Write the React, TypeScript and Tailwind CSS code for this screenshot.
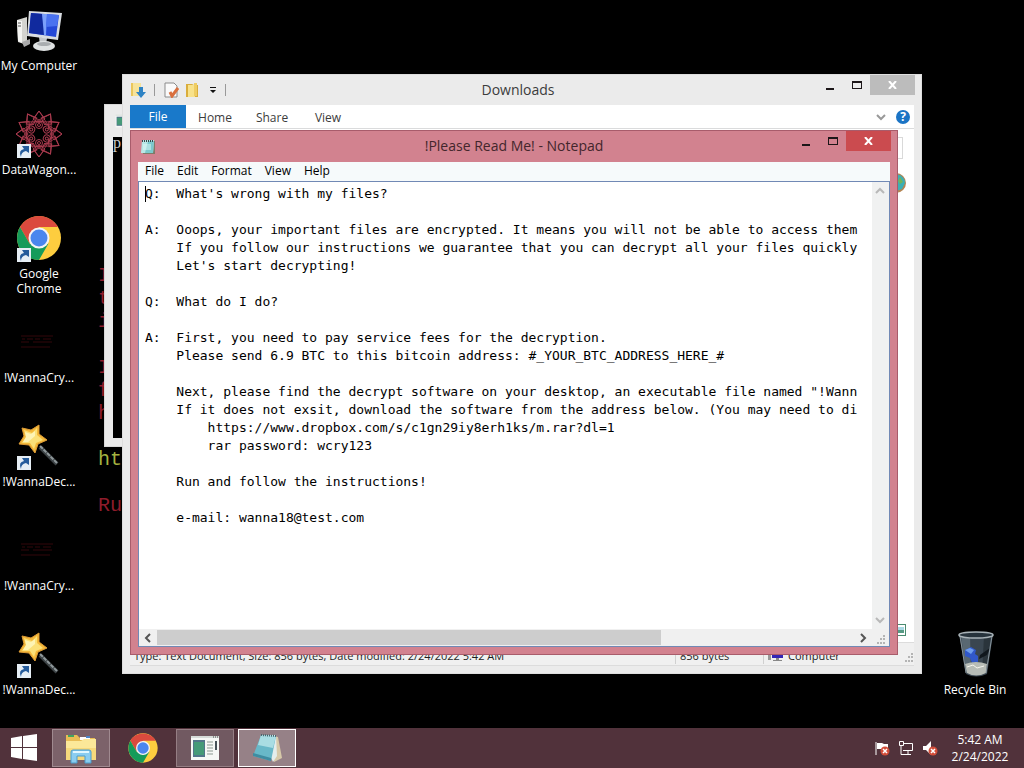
import { ReactNode } from "react";

const note = `Q:  What's wrong with my files?

A:  Ooops, your important files are encrypted. It means you will not be able to access them
    If you follow our instructions we guarantee that you can decrypt all your files quickly
    Let's start decrypting!

Q:  What do I do?

A:  First, you need to pay service fees for the decryption.
    Please send 6.9 BTC to this bitcoin address: #_YOUR_BTC_ADDRESS_HERE_#

    Next, please find the decrypt software on your desktop, an executable file named "!Wann
    If it does not exsit, download the software from the address below. (You may need to di
        https://www.dropbox.com/s/c1gn29iy8erh1ks/m.rar?dl=1
        rar password: wcry123

    Run and follow the instructions!

    e-mail: wanna18@test.com`;

function ComputerIcon() {
  return (
    <svg viewBox="0 0 48 48" className="size-12">
      <path d="M2 14 12 11v28L3 36z" fill="#d4d4d0" />
      <path d="M2 14 7 15v22l-4-2z" fill="#f4f4f2" />
      <path d="M3 17h3M3 20h3" stroke="#555" />
      <path d="M7 36 15 33v5l-6 3z" fill="#aaa" />
      <path d="m24 31 8 1-1 7h-6z" fill="#c4c7ca" />
      <ellipse cx="29" cy="40" rx="11" ry="5" fill="#dfe2e3" />
      <ellipse cx="29" cy="38" rx="7" ry="2" fill="#a9adb0" />
      <path d="m14 5 33 2-4 27-31-4z" fill="#d9dde2" />
      <path d="m16 7 28 2-3 22-27-4z" fill="#2448d8" />
      <path d="m16 7 11 1 3 21-16-2z" fill="#102a9e" />
      <path d="m27 8 5 0-1 21h-2z" fill="#7ba0fb" />
      <path d="m32 8 12 1-2 11-11 1z" fill="#4a72f0" />
    </svg>
  );
}

function WagonIcon() {
  const angles = [0, 30, 60, 90, 120, 150, 180, 210, 240, 270, 300, 330];
  return (
    <svg viewBox="-24 -24 48 48" className="size-12" fill="none" stroke="#a83a4e">
      {angles.map((a) => (
        <g key={a} transform={`rotate(${a})`}>
          <path d="M0-23 6-15 0-11-6-15z" />
          <path d="M0-23 11-6M0-23-11-6" strokeWidth="0.8" />
        </g>
      ))}
      {[0, 60, 120, 180, 240, 300].map((a) => (
        <g key={a} transform={`rotate(${a})`}>
          <circle cy="-9" r="3.500" />
          <circle cy="-9" r="1.500" />
        </g>
      ))}
    </svg>
  );
}

function ChromeIcon({ className }: { className: string }) {
  return (
    <svg viewBox="0 0 48 48" className={className}>
      <circle cx="24" cy="24" r="22" fill="#fdcd3f" />
      <path d="M5 13A22 22 0 0 1 43 13H24L14.500 29.500z" fill="#db4a3e" />
      <path d="M5 13A22 22 0 0 0 24 46L33.500 29.500 24 34 14.500 29.500z" fill="#159b5a" />
      <circle cx="24" cy="24" r="10.500" fill="#f4f4f4" />
      <circle cx="24" cy="24" r="8.500" fill="#4a86ee" />
    </svg>
  );
}

function WandIcon() {
  return (
    <svg viewBox="0 0 48 48" className="size-12">
      <path d="m25 25 17 17" stroke="#3d4346" strokeWidth="4" />
      <path d="m25 24 17 17" stroke="#8f989b" strokeWidth="2" strokeDasharray="4 1" />
      <path
        d="M24 3v9l8 6-9 4-3 9-6-8-10-1 5-8-2-8 9 2z"
        fill="#f4b93a"
        stroke="#dc9a35"
        strokeLinejoin="round"
      />
      <path d="m22 6 0 7 6 5-7 3-2 6-4-6-8 0 4-6-2-7 8 3z" fill="#fbe078" />
      <path d="m20 9 0 5-7 6-5 0 3-5-1-5 6 2z" fill="#fdf3b4" />
    </svg>
  );
}

function CryIcon() {
  return (
    <svg viewBox="0 0 48 48" className="size-12" stroke="#32070a" fill="none">
      <path d="M6 18h32M6 24h8m4 0h19M6 29h29" />
      <path d="M7 21h3m2 0h6m2 0h5m3 0h8" />
    </svg>
  );
}

function BinIcon() {
  return (
    <svg viewBox="0 0 48 48" className="size-12">
      <path d="M8 4h34l-6 40q-11 5-21 0z" fill="#3a4650" />
      <path d="M10 5h9l1 38-5-1z" fill="#596872" />
      <path d="m33 6 7-1-5 38-4 1z" fill="#2a343b" />
      <path d="m29 25 10-7-3 7-8 4z" fill="#10171d" />
      <path d="m14 20 6-3 5 3-1 4 3 2v6l-6 1-2-5-5-2z" fill="#3158c9" />
      <path d="m14 20 5-2 4 2-3 4z" fill="#6e9dec" />
      <path d="M14 34q11-4 22 0l-1 9q-10 5-19 0z" fill="#b7bcb6" />
      <path d="m16 37 6-2 4 3 7-2" stroke="#f5f5ed" fill="none" />
      <path d="m9 6 6 37M41 6l-6 37" stroke="#87939a" />
      <ellipse cx="25" cy="5" rx="17" ry="3" fill="#27333c" stroke="#a9b3b8" strokeWidth="1.500" />
    </svg>
  );
}

function NotepadIcon({ className }: { className: string }) {
  return (
    <svg viewBox="0 0 16 16" className={className}>
      <path d="M3 2h12v13H3z" fill="#7f7a68" />
      <path d="M2 1h12l-1 13H1z" fill="#b9e7e6" />
      <path d="M8 2h6l-1 12H5z" fill="#7cc9cd" />
      <path d="M2 2h12" stroke="#38474a" strokeWidth="2" strokeDasharray="1 1" />
      <path d="M3 6h8M3 8h8M3 10h8" stroke="#dff8f6" />
    </svg>
  );
}

function ProgramIcon({ className }: { className: string }) {
  return (
    <svg viewBox="0 0 30 26" className={className}>
      <path d="M1 1h28v24H1z" fill="#f6f8f6" />
      <path d="M1 1h28v2H1z" fill="#d6dbd8" />
      <path d="M23 2h1m1 0h1m1 0h1" stroke="#444" />
      <path d="M3 5h12v17H3z" fill="#51758a" />
      <path d="M4 7h10v13H4z" fill="#459a78" />
      <path d="M17 7h6M17 10h6M17 13h6M17 16h6M17 19h6" stroke="#8b9991" />
      <path d="M25 6h2v9h-2z" fill="#455158" />
    </svg>
  );
}

function ShortcutArrow() {
  return (
    <svg viewBox="0 0 14 14" className="absolute bottom-0 left-0.5 size-3.5">
      <path d="M0 0h14v14H0z" fill="#e6eef5" />
      <path d="M4 13Q1 6 7 5L5 2l7 0v7L9 7q-5 1-5 6" fill="#255b9b" />
    </svg>
  );
}

function DesktopIcon({ label, shortcut, children }: { label: ReactNode; shortcut?: boolean; children: ReactNode }) {
  return (
    <button className="flex h-26 w-[78px] flex-col items-center text-xs leading-[15px] whitespace-nowrap text-white">
      <span className="relative flex size-12 items-center justify-center">
        {children}
        {shortcut && <ShortcutArrow />}
      </span>
      <span className="mt-1">{label}</span>
    </button>
  );
}

function WindowButtons({ close }: { close: string }) {
  return (
    <div className="flex h-full items-start">
      <button aria-label="Minimize" className="flex h-6 w-[27px] items-center justify-center">
        <svg viewBox="0 0 10 10" className="size-2.5">
          <path d="M1 6h8v2H1z" fill="#1c1618" />
        </svg>
      </button>
      <button aria-label="Maximize" className="flex h-5 w-[27px] items-center justify-center">
        <svg viewBox="0 0 10 10" className="size-2.5">
          <path d="M0 1h10v8H0zm1 2v5h8V3z" fill="#1c1618" fillRule="evenodd" />
        </svg>
      </button>
      <button aria-label="Close" className={close}>
        <svg viewBox="0 0 9 8" className="h-2 w-[9px]" stroke="#fff" strokeWidth="2">
          <path d="m1 0 7 8m0-8L1 8" />
        </svg>
      </button>
    </div>
  );
}

function Chevron({ d, className }: { d: string; className: string }) {
  return (
    <svg viewBox="0 0 10 10" className={className} fill="none" stroke="currentColor" strokeWidth="2">
      <path d={d} />
    </svg>
  );
}

function Grip() {
  return (
    <svg viewBox="0 0 10 10" className="size-2.5" fill="#b4b4b4">
      <path d="M7 0h2v2H7zM4 3h2v2H4zM7 3h2v2H7zM1 7h2v2H1zM4 7h2v2H4zM7 7h2v2H7z" />
    </svg>
  );
}

function Wallpaper() {
  return (
    <div className="absolute top-[264px] left-[98px] w-[828px] font-['Liberation_Mono',monospace] text-xl leading-[23px] text-[#8f1c2b]">
      <div className="flex justify-between">
        <span>If</span>
        <span>,</span>
      </div>
      <div>th</div>
      <div>it</div>
      <br />
      <div>If</div>
      <div>fo</div>
      <div>he</div>
      <br />
      <div className="text-[#a5b340]">ht</div>
      <br />
      <div>Ru</div>
    </div>
  );
}

function ConsoleWindow() {
  return (
    <section className="absolute top-[104px] left-[104px] flex h-[343px] w-[600px] flex-col border border-[#d8d8d8] bg-[#ebebeb] px-2 pb-2">
      <div className="flex h-8 items-center pl-0.5">
        <ProgramIcon className="size-4" />
      </div>
      <div className="grow bg-black font-['Liberation_Serif',serif] text-base leading-3 text-[#ccc]">p</div>
    </section>
  );
}

function ExplorerWindow() {
  return (
    <section className="absolute top-[74px] left-[122px] flex h-[600px] w-[800px] flex-col border border-[#dedede] bg-[#ebebeb] px-[7px] pb-[7px] text-[#3c3c3c]">
      <header className="relative flex h-[30px] items-center justify-between">
        <div className="flex items-center gap-2">
          <svg viewBox="0 0 16 16" className="size-4">
            <path d="M1 1h10v13H1z" fill="#eac65b" />
            <path d="M3 1h8v13H3z" fill="#f7e39a" />
            <path d="M9 5h4v5h3l-5 6-5-6h3z" fill="#2f83c4" />
          </svg>
          <span className="h-3 w-px bg-[#999]" />
          <svg viewBox="0 0 16 16" className="size-4">
            <path d="M2 1h9l3 3v11H2z" fill="#fafafa" stroke="#8b8b8b" />
            <path d="m7 10 2 4 6-8" stroke="#d9703f" strokeWidth="3" fill="none" />
          </svg>
          <svg viewBox="0 0 16 16" className="-ml-0.5 size-4">
            <path d="M1 2h6l2 1h4v12H1z" fill="#d9ad3c" />
            <path d="M3 3h7v12H3z" fill="#f8e28b" />
            <path d="M9 1h3v13H9z" fill="#efcd63" />
          </svg>
          <svg viewBox="0 0 8 8" className="size-2">
            <path d="M1 1h6v1H1zM1 4h6L4 7z" fill="#111" />
          </svg>
          <span className="h-3 w-px bg-[#999]" />
        </div>
        <h2 className="absolute inset-x-0 text-center text-sm">
          <span className="pr-2">Downloads</span>
        </h2>
        <WindowButtons close="-mr-px flex h-5 w-[45px] items-center justify-center bg-[#bcbcbc]" />
      </header>
      <nav className="flex h-6 items-center border-b border-[#dadbdc] bg-white text-xs">
        <button className="h-full w-14 bg-[#1979ca] text-white">File</button>
        <button className="w-[58px] pt-0.5">Home</button>
        <button className="w-14 pt-0.5">Share</button>
        <button className="w-14 pt-0.5">View</button>
        <span className="ml-auto flex items-center gap-2.5 pr-1">
          <Chevron d="m1 3 4 4 4-4" className="size-2.5 text-[#999]" />
          <button
            aria-label="Help"
            className="flex size-3.5 items-center justify-center rounded-full bg-[#1b74c5] font-bold text-white"
          >
            ?
          </button>
        </span>
      </nav>
      <div className="flex grow flex-col items-end bg-white">
        <div className="mt-2 mr-[11px] h-[22px] w-40 border border-[#d9d9d9]" />
        <svg viewBox="0 0 20 20" className="mt-3.5 mr-2 size-5">
          <circle cx="10" cy="10" r="10" fill="#b48452" />
          <path d="M10 1q9 2 9 9l-3 6-6 2z" fill="#3bafb5" />
          <path d="m14 4 3 5-3 2-2-3z" fill="#72b35b" />
        </svg>
        <svg viewBox="0 0 12 12" className="mt-auto mr-2 mb-1.5 size-3">
          <path d="M0 0h12v12H0z" fill="#4a8b70" />
          <path d="M1 1h10v10H1z" fill="#fff" />
          <path d="M2 3h8v6H2z" fill="#579a84" />
          <path d="M2 3h8v3H2z" fill="#a9d9e4" />
        </svg>
      </div>
      <footer className="flex h-6 items-center border-y border-[#dcdcdc] bg-[#f0f0f0] text-[11px] text-[#1e1e1e]">
        <span className="grow pt-1 pl-1">Type: Text Document, Size: 856 bytes, Date modified: 2/24/2022 5:42 AM</span>
        <span className="w-22 border-l border-[#d0d0d0] pt-1 pl-1">856 bytes</span>
        <span className="flex w-[151px] items-center gap-1 border-l border-[#d0d0d0] pt-1 pl-1">
          <svg viewBox="0 0 16 16" className="size-4">
            <path d="M0 3h3v9H0z" fill="#999" />
            <path d="M4 2h11v8H4z" fill="#3325b5" />
            <path d="M8 10h3v2h3v1H5v-1h3z" fill="#888" />
          </svg>
          Computer
          <span className="mt-1 ml-auto">
            <Grip />
          </span>
        </span>
      </footer>
    </section>
  );
}

function NotepadWindow() {
  return (
    <section className="absolute top-[130px] left-[130px] flex h-[525px] w-[768px] flex-col border border-[#a85c6b] bg-[#d2828f] px-[7px] pb-[7px] text-black">
      <header className="relative flex h-[31px] items-center justify-between pl-0.5">
        <NotepadIcon className="size-4" />
        <h1 className="absolute inset-x-0 pb-0.5 text-center text-sm text-[#43262c]">!Please Read Me! - Notepad</h1>
        <WindowButtons close="-mr-px flex h-5 w-[45px] items-center justify-center bg-[#cb4b4f]" />
      </header>
      <nav className="flex h-[19px] items-center gap-[13px] bg-[#f6fafb] pb-0.5 pl-[7px] text-xs">
        <button>File</button>
        <button>Edit</button>
        <button>Format</button>
        <button>View</button>
        <button>Help</button>
      </nav>
      <div className="relative flex grow flex-col border border-[#7189b5] bg-white">
        <span className="absolute top-1 left-1.5 h-4 w-px bg-black" />
        <div className="flex grow">
          <textarea
            aria-label="Text"
            readOnly
            wrap="off"
            value={note}
            className="mr-1 ml-1.5 grow resize-none overflow-hidden pt-[3px] font-['DejaVu_Sans_Mono',monospace] text-[13px] leading-[18px] outline-none"
          />
          <div className="flex w-[17px] flex-col items-center justify-between bg-[#f0f1f1] py-1 pr-0.5 text-[#b8b8b8]">
            <Chevron d="m1 7 4-4 4 4" className="size-2.5" />
            <Chevron d="m1 3 4 4 4-4" className="size-2.5" />
          </div>
        </div>
        <div className="flex h-[17px] items-center bg-[#f0f0f0] text-[#555]">
          <span className="flex w-[18px] justify-center">
            <Chevron d="M7 1 3 5l4 4" className="size-2.5" />
          </span>
          <span className="h-[15px] w-[504px] bg-[#cdcdcd]" />
          <span className="mr-[3px] ml-auto flex items-center gap-2">
            <Chevron d="m3 1 4 4-4 4" className="size-2.5" />
            <span className="pt-1">
              <Grip />
            </span>
          </span>
        </div>
      </div>
    </section>
  );
}

function Taskbar() {
  return (
    <footer className="flex h-10 shrink-0 items-center bg-[#51323b] text-white">
      <button aria-label="Start" className="flex w-[52px] items-center pl-2.5">
        <svg viewBox="0 0 28 28" className="size-7" fill="#fff">
          <path d="m1 4 11-2v11H1zM13 2l14-2v13H13zM1 14h11v11L1 23zM13 14h14v13l-14-2z" />
        </svg>
      </button>
      <div className="flex gap-1">
        <button aria-label="File Explorer" className="flex h-[38px] w-[58px] items-center justify-center border border-[#a08a90] bg-[#7c626a]">
          <svg viewBox="0 0 34 32" className="h-8 w-[34px]">
            <path d="M2 3h11l3 3h15v22H2z" fill="#e8bd55" />
            <path d="M4 3h6v2H4z" fill="#41a45f" />
            <path d="M16 5h10v3H16z" fill="#fff" />
            <path d="M22 4h4v2h-4z" fill="#4c86ca" />
            <path d="M2 9h15l3-2h12v21H2z" fill="#fbe899" />
            <path d="M2 16h30v12H2z" fill="#f6d97c" />
            <path d="M7 31V20q0-2 2-2h16q2 0 2 2v11h-6v-7h-8v7z" fill="#8acdf0" stroke="#4b9dcc" />
            <path d="M9 20h16" stroke="#e0f7ff" strokeWidth="2" />
          </svg>
        </button>
        <button aria-label="Google Chrome" className="flex h-[38px] w-[58px] items-center justify-center">
          <ChromeIcon className="size-8" />
        </button>
        <button aria-label="Program" className="flex h-[38px] w-[58px] items-center justify-center border border-[#957e84] bg-[#715961]">
          <ProgramIcon className="h-[26px] w-[30px]" />
        </button>
        <button aria-label="Notepad" className="flex h-[38px] w-[58px] items-center justify-center border border-white bg-[#968187]">
          <svg viewBox="0 0 32 30" className="h-[30px] w-8">
            <path d="m22 3 5 1 4 21-8 4z" fill="#d7c9a9" />
            <path d="M10 2h15l1 21-4 6z" fill="#e4edec" />
            <path d="m10 2 15 1-5 25-18-5z" fill="#68b8c8" />
            <path d="m10 2 15 1-3 12L7 12z" fill="#a9dde3" />
            <path d="m2 20 18 5v3L2 23z" fill="#3e8ca1" />
            <path d="m10 2 15 1" stroke="#46656c" strokeWidth="2" strokeDasharray="1 1" />
          </svg>
        </button>
      </div>
      <div className="ml-auto flex items-center gap-2">
        <svg viewBox="0 0 16 16" className="size-4">
          <path d="M2 2v13" stroke="#fff" />
          <path d="M3 3h5l2 1h4v6H8L7 9H3z" fill="#fff" />
          <circle cx="11" cy="11" r="4.500" fill="#d24d39" />
          <path d="m9 9 4 4m0-4-4 4" stroke="#fff" strokeWidth="1.500" />
        </svg>
        <svg viewBox="0 0 16 16" className="size-4" fill="none" stroke="#fff">
          <path d="M6 3.500h8.500v7H5M10 11v3M6 14.500h7M3 6v8.500h3" />
          <path d="M1.500 1.500h4v4h-4z" />
        </svg>
        <svg viewBox="0 0 16 16" className="size-4">
          <path d="M1 6h3l5-5v14l-5-5H1z" fill="#fff" />
          <circle cx="11" cy="11" r="4.500" fill="#d24d39" />
          <path d="m9 9 4 4m0-4-4 4" stroke="#fff" strokeWidth="1.500" />
        </svg>
      </div>
      <div className="mr-3.5 ml-3 w-15 text-center text-xs leading-[17px] whitespace-nowrap">
        <div>5:42 AM</div>
        <div>2/24/2022</div>
      </div>
    </footer>
  );
}

export default function App() {
  return (
    <div className="flex h-screen flex-col overflow-hidden bg-black font-['Open_Sans',sans-serif] select-none">
      <main className="relative min-h-0 grow">
        <Wallpaper />
        <div className="flex flex-col items-start pt-1.5">
          <DesktopIcon label="My Computer">
            <ComputerIcon />
          </DesktopIcon>
          <DesktopIcon label="DataWagon..." shortcut>
            <WagonIcon />
          </DesktopIcon>
          <DesktopIcon
            label={
              <>
                Google
                <br />
                Chrome
              </>
            }
            shortcut
          >
            <ChromeIcon className="size-12" />
          </DesktopIcon>
          <DesktopIcon label="!WannaCry...">
            <CryIcon />
          </DesktopIcon>
          <DesktopIcon label="!WannaDec..." shortcut>
            <WandIcon />
          </DesktopIcon>
          <DesktopIcon label="!WannaCry...">
            <CryIcon />
          </DesktopIcon>
          <DesktopIcon label="!WannaDec..." shortcut>
            <WandIcon />
          </DesktopIcon>
        </div>
        <div className="absolute top-[630px] right-2.5">
          <DesktopIcon label="Recycle Bin">
            <BinIcon />
          </DesktopIcon>
        </div>
        <ConsoleWindow />
        <ExplorerWindow />
        <NotepadWindow />
      </main>
      <Taskbar />
    </div>
  );
}
